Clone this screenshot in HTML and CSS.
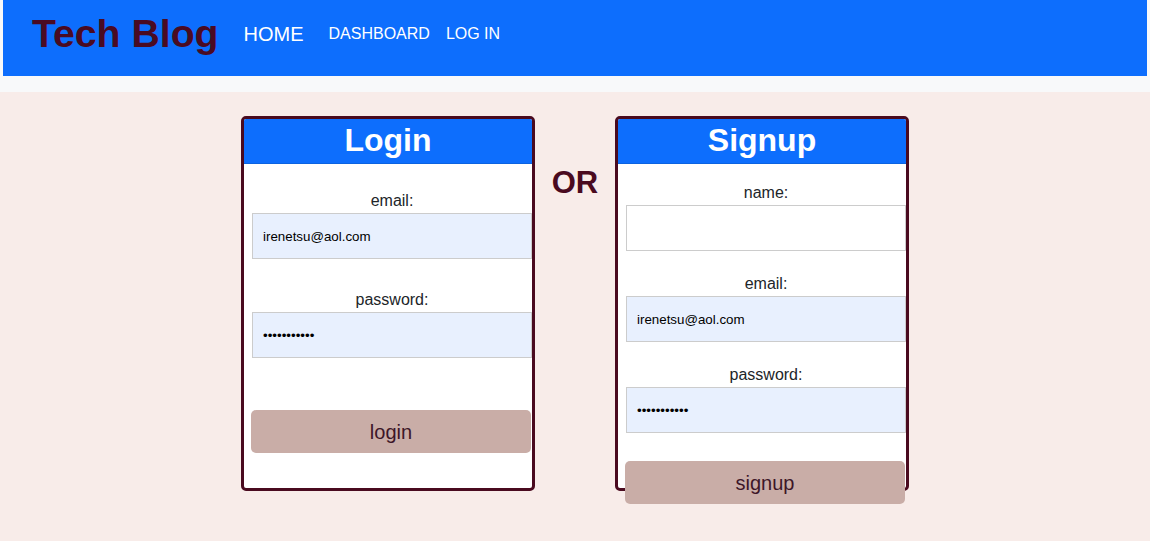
FILE: index.html
```html
<!DOCTYPE html>
<html lang="en">
<head>
<meta charset="utf-8">
<title>Tech Blog</title>
<link rel="stylesheet" href="styles.css">
</head>
<body>
<header class="topbar">
  <h1 class="brand">Tech Blog</h1>
  <nav class="nav">
    <a class="nav-link nav-home" href="#">HOME</a>
    <a class="nav-link nav-dash" href="#">DASHBOARD</a>
    <a class="nav-link nav-login" href="#">LOG IN</a>
  </nav>
</header>
<main class="page">
  <section class="card card-login">
    <h2 class="card-title">Login</h2>
    <form class="card-form">
      <label class="field-label first-login" for="login-email">email:</label>
      <input class="field autofill" id="login-email" type="text" value="irenetsu@aol.com">
      <label class="field-label next-login" for="login-pass">password:</label>
      <input class="field autofill" id="login-pass" type="password" value="password123">
      <button class="btn btn-login" type="button">login</button>
    </form>
  </section>
  <div class="or">OR</div>
  <section class="card card-signup">
    <h2 class="card-title">Signup</h2>
    <form class="card-form">
      <label class="field-label first-signup" for="su-name">name:</label>
      <input class="field" id="su-name" type="text" value="">
      <label class="field-label next-signup" for="su-email">email:</label>
      <input class="field autofill" id="su-email" type="text" value="irenetsu@aol.com">
      <label class="field-label next-signup" for="su-pass">password:</label>
      <input class="field autofill" id="su-pass" type="password" value="password123">
      <button class="btn btn-signup" type="button">signup</button>
    </form>
  </section>
</main>
</body>
</html>
```

FILE: styles.css
```css
* { box-sizing: border-box; }

html, body {
  height: 100%;
}

body {
  margin: 0;
  background: #f8f9fa;
  font-family: "Liberation Sans", Arial, sans-serif;
  color: #212529;
  display: flex;
  flex-direction: column;
}

.topbar {
  margin: 0 3px;
  height: 76px;
  background: #0d6efd;
  display: flex;
  align-items: center;
  padding-left: 29px;
  padding-bottom: 8px;
  flex: none;
}

.brand {
  margin: 0;
  font-size: 39.2px;
  font-weight: bold;
  color: #4a0b22;
  line-height: 1;
}

.nav {
  display: flex;
  align-items: center;
  margin-left: 25px;
}

.nav-link {
  color: #ffffff;
  text-decoration: none;
  font-size: 16px;
}

.nav-home { font-size: 20px; }
.nav-dash { margin-left: 25px; }
.nav-login { margin-left: 16px; }

.page {
  margin-top: 16px;
  flex: 1;
  background: #f8ece9;
  display: flex;
  justify-content: center;
  align-items: flex-start;
  padding-top: 24px;
}

.card {
  width: 294px;
  height: 375px;
  border: 3px solid #4a0a1f;
  border-radius: 5px;
  background: #ffffff;
}

.card-title {
  margin: 0;
  height: 45px;
  background: #0d6efd;
  border-bottom: 1px solid #0b63e0;
  border-radius: 2px 2px 0 0;
  color: #ffffff;
  font-size: 32px;
  font-weight: bold;
  text-align: center;
  line-height: 42px;
}

.card-form {
  display: flex;
  flex-direction: column;
  padding-left: 8px;
}

.field-label {
  display: block;
  text-align: center;
  font-size: 16px;
  line-height: 18px;
  color: #212529;
}

.first-login { margin-top: 28px; }
.next-login { margin-top: 32px; }
.first-signup { margin-top: 20px; }
.next-signup { margin-top: 24px; }

.field {
  margin-top: 3px;
  width: 280px;
  height: 46px;
  border: 1px solid #cccccc;
  background: #ffffff;
  padding: 0 10px;
  font-family: "Liberation Sans", Arial, sans-serif;
  font-size: 13.33px;
  color: #000000;
  outline: none;
}

.autofill {
  background: #e8f0fe;
}

.btn {
  width: 280px;
  height: 43px;
  margin-left: -1px;
  border: none;
  border-radius: 5px;
  background: #c9ada7;
  color: #3d1628;
  font-family: "Liberation Sans", Arial, sans-serif;
  font-size: 20px;
  padding: 2px 0 0;
}

.btn-login { margin-top: 52px; }
.btn-signup { margin-top: 28px; }

.or {
  width: 80px;
  margin-top: 48px;
  text-align: center;
  font-size: 31px;
  font-weight: bold;
  color: #4a0a1f;
  line-height: 38px;
}
```
